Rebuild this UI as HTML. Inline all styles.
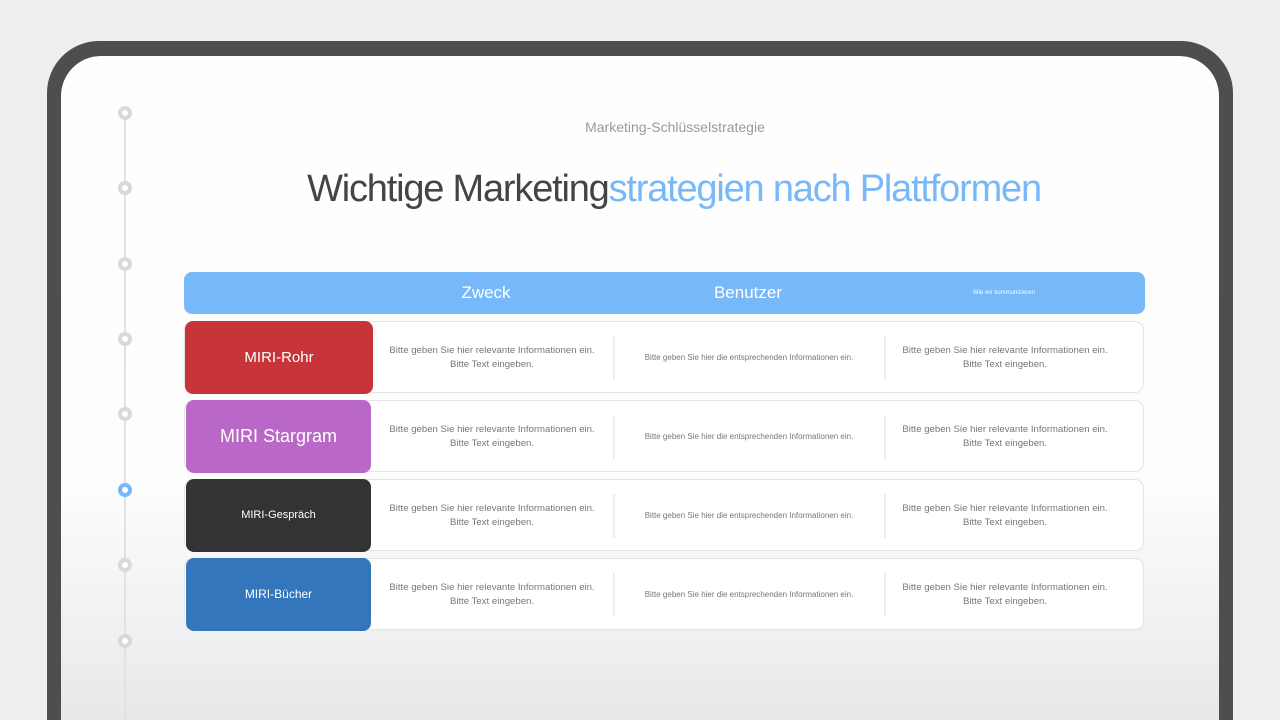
<!DOCTYPE html>
<html style="width:1280px;height:720px;overflow:hidden"><head><meta charset="utf-8"><style>
*{margin:0;padding:0;box-sizing:border-box}
body{width:1280px;height:720px;overflow:hidden;background:#eeeeee;font-family:"Liberation Sans",sans-serif;position:relative}
.frame{position:absolute;left:47px;top:41px;width:1186px;height:679px;background:#4e4d4f;border-radius:52px 52px 0 0}
.screen{position:absolute;left:61px;top:56px;width:1158px;height:664px;border-radius:40px 40px 0 0;background:linear-gradient(#fefefe 0%,#fdfdfd 65%,#e8e7ea 100%)}
.line{position:absolute;left:124px;top:113px;width:2px;height:607px;background:#e2e2e2}
.dot{position:absolute;left:118px;width:14px;height:14px;border-radius:50%;background:#fff;border:4px solid #d9d9d9}
.dot.a{border-color:#77b8f9}
.sub{position:absolute;left:0;width:1350px;top:119px;text-align:center;font-size:14px;color:#9a9a9a}
.title{position:absolute;left:0;width:1348px;top:168px;text-align:center;font-size:38px;color:#444;letter-spacing:-1.2px}
.title span{color:#77b8f9}
.head{position:absolute;left:184px;top:272px;width:961px;height:42px;background:#77b8f9;border-radius:8px;color:#fff}
.head div{position:absolute;top:0;line-height:42px;text-align:center}
.row{position:absolute;left:184px;width:960px;height:72px;background:#fff;border:1px solid #e4e4e4;border-radius:9px}
.lab{position:absolute;left:0;top:-1px;width:187px;height:73px;border-radius:8px;color:#fff;text-align:center;line-height:73px;font-size:15px}
.c{position:absolute;top:0;height:72px;display:flex;align-items:center;justify-content:center;text-align:center;color:#777;font-size:9.6px;line-height:14px}
.dv{position:absolute;top:14px;width:2px;height:44px;background:#eee}
</style></head><body>
<div class="frame"></div><div class="screen"></div>
<div class="line"></div>
<div class="dot" style="top:106px"></div><div class="dot" style="top:181px"></div><div class="dot" style="top:257px"></div><div class="dot" style="top:332px"></div><div class="dot" style="top:407px"></div><div class="dot a" style="top:483px"></div><div class="dot" style="top:558px"></div><div class="dot" style="top:634px"></div>
<div class="sub">Marketing-Schlüsselstrategie</div>
<div class="title">Wichtige Marketing<span>strategien nach Plattformen</span></div>
<div class="head"><div style="left:202px;width:200px;font-size:17px">Zweck</div><div style="left:464px;width:200px;font-size:17px">Benutzer</div><div style="left:720px;width:200px;font-size:6px">Wie wir kommunizieren</div></div>
<div class="row" style="top:321px"><div class="lab" style="background:#c7353a;width:188px">MIRI-Rohr</div>
<div class="c" style="left:187px;width:240px">Bitte geben Sie hier relevante Informationen ein.<br>Bitte Text eingeben.</div><div class="dv" style="left:428px"></div>
<div class="c" style="left:430px;width:268px;font-size:8px">Bitte geben Sie hier die entsprechenden Informationen ein.</div><div class="dv" style="left:699px"></div>
<div class="c" style="left:701px;width:238px">Bitte geben Sie hier relevante Informationen ein.<br>Bitte Text eingeben.</div></div>
<div class="row" style="top:400px"><div class="lab" style="background:#b968c7;left:1px;width:185px;font-size:18px">MIRI Stargram</div>
<div class="c" style="left:187px;width:240px">Bitte geben Sie hier relevante Informationen ein.<br>Bitte Text eingeben.</div><div class="dv" style="left:428px"></div>
<div class="c" style="left:430px;width:268px;font-size:8px">Bitte geben Sie hier die entsprechenden Informationen ein.</div><div class="dv" style="left:699px"></div>
<div class="c" style="left:701px;width:238px">Bitte geben Sie hier relevante Informationen ein.<br>Bitte Text eingeben.</div></div>
<div class="row" style="top:479px"><div class="lab" style="background:#333;left:1px;width:185px;font-size:11px">MIRI-Gespräch</div>
<div class="c" style="left:187px;width:240px">Bitte geben Sie hier relevante Informationen ein.<br>Bitte Text eingeben.</div><div class="dv" style="left:428px"></div>
<div class="c" style="left:430px;width:268px;font-size:8px">Bitte geben Sie hier die entsprechenden Informationen ein.</div><div class="dv" style="left:699px"></div>
<div class="c" style="left:701px;width:238px">Bitte geben Sie hier relevante Informationen ein.<br>Bitte Text eingeben.</div></div>
<div class="row" style="top:558px"><div class="lab" style="background:#3476bb;left:1px;width:185px;font-size:12px">MIRI-Bücher</div>
<div class="c" style="left:187px;width:240px">Bitte geben Sie hier relevante Informationen ein.<br>Bitte Text eingeben.</div><div class="dv" style="left:428px"></div>
<div class="c" style="left:430px;width:268px;font-size:8px">Bitte geben Sie hier die entsprechenden Informationen ein.</div><div class="dv" style="left:699px"></div>
<div class="c" style="left:701px;width:238px">Bitte geben Sie hier relevante Informationen ein.<br>Bitte Text eingeben.</div></div>
</body></html>
